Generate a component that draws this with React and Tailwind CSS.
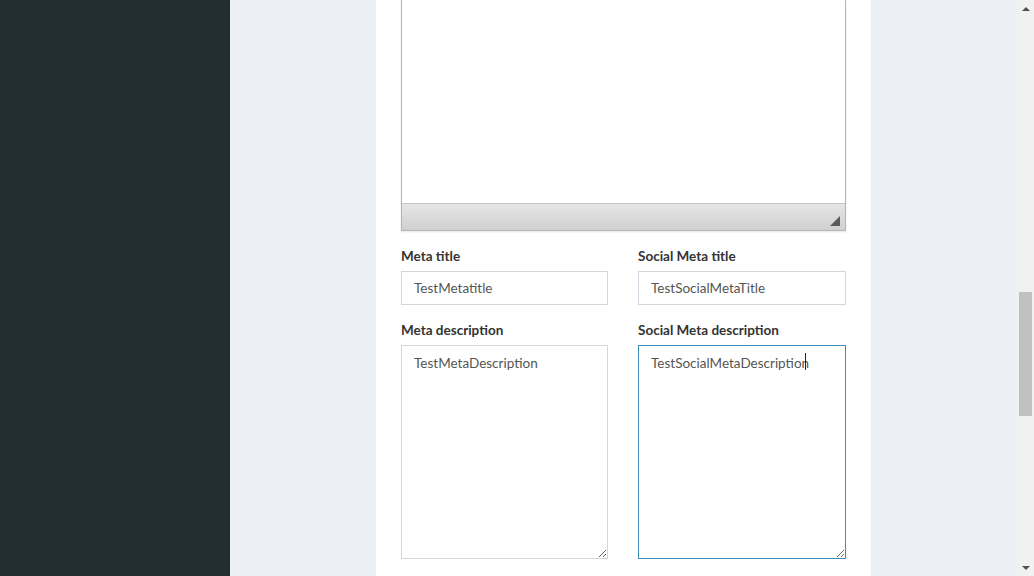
import React from 'react';

const Field = ({ label, value, focused }) => (
  <div className="flex flex-col">
    <label className="text-[13.5px] font-bold text-[#333] leading-[20px] mb-[5px]">{label}</label>
    <input
      readOnly
      value={value}
      className={`h-[34px] w-full border px-[12px] text-[13.5px] text-[#555] outline-none bg-white ${
        focused ? 'border-[#3c8dbc]' : 'border-[#d2d6de]'
      }`}
    />
  </div>
);

const Area = ({ label, value, focused }) => (
  <div className="flex flex-col">
    <label className="text-[13.5px] font-bold text-[#333] leading-[20px] mb-[5px]">{label}</label>
    <div className="relative">
      <textarea
        readOnly
        value={value}
        className={`block h-[214px] w-full border px-[12px] py-[7px] text-[13.5px] text-[#555] outline-none bg-white resize-y ${
          focused ? 'border-[#3c8dbc]' : 'border-[#d2d6de]'
        }`}
      />
      {focused && (
        <span className="absolute left-[167px] top-[8px] h-[17px] w-px bg-[#222]" />
      )}
    </div>
  </div>
);

export default function App() {
  return (
    <div className="flex h-[576px] w-[1034px] overflow-hidden font-['Lato','Open_Sans',sans-serif]">
      <aside className="w-[230px] shrink-0 bg-[#222d32]" />
      <main className="flex flex-1 justify-center bg-[#ecf0f5] pl-[146px] pr-[146px]">
        <div className="w-[495px] shrink-0 bg-white px-[25px]">
          <div className="border border-t-0 border-[#b5b5b5] shadow-[0_1px_2px_rgba(0,0,0,0.1)]">
            <div className="h-[203px] bg-white" />
            <div className="relative h-[27px] border-t border-[#c4c4c4] bg-gradient-to-b from-[#e6e6e6] to-[#d0d0d0]">
              <svg className="absolute right-[5px] bottom-[4px]" width="10" height="10" viewBox="0 0 10 10">
                <polygon points="10,0 10,10 0,10" fill="#5a5a5a" />
              </svg>
            </div>
          </div>
          <div className="mt-[15px] grid grid-cols-[207px_1fr] gap-x-[30px]">
            <Field label="Meta title" value="TestMetatitle" />
            <Field label="Social Meta title" value="TestSocialMetaTitle" />
          </div>
          <div className="mt-[15px] grid grid-cols-[207px_1fr] gap-x-[30px]">
            <Area label="Meta description" value="TestMetaDescription" />
            <Area label="Social Meta description" value="TestSocialMetaDescription" focused />
          </div>
        </div>
      </main>
      <div className="flex w-[17px] shrink-0 flex-col items-center bg-[#f1f1f1]">
        <div className="flex h-[17px] items-center justify-center">
          <svg width="8" height="4" viewBox="0 0 8 4"><polygon points="4,0 8,4 0,4" fill="#505050" /></svg>
        </div>
        <div className="h-[275px]" />
        <div className="h-[124px] w-[13px] bg-[#c1c1c1]" />
        <div className="flex-1" />
        <div className="flex h-[17px] items-center justify-center">
          <svg width="8" height="4" viewBox="0 0 8 4"><polygon points="0,0 8,0 4,4" fill="#505050" /></svg>
        </div>
      </div>
    </div>
  );
}
